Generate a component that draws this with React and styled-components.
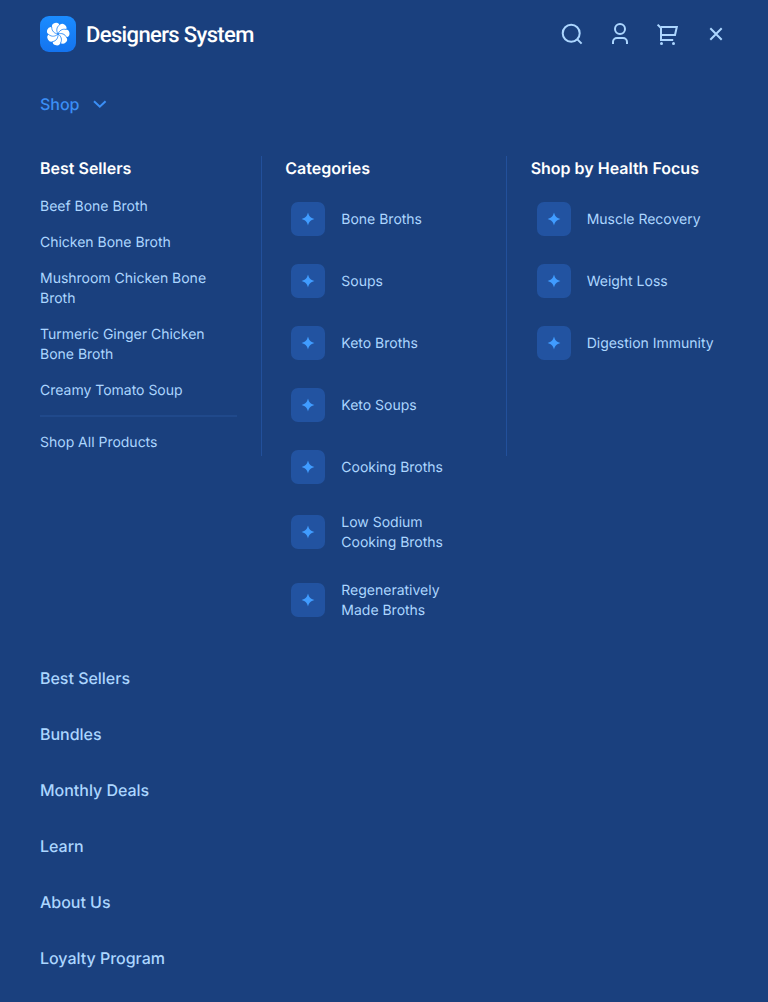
import React from "react";
import styled, { createGlobalStyle } from "styled-components";

const GlobalStyle = createGlobalStyle`
  *, *::before, *::after { box-sizing: border-box; }
  body {
    margin: 0;
    background: #1a407e;
    color: #acd6ff;
    font-family: Inter, "Liberation Sans", sans-serif;
    text-rendering: geometricPrecision;
  }
  button { font: inherit; color: inherit; background: none; border: 0; padding: 0; cursor: pointer; }
  a { color: inherit; text-decoration: none; }
  svg { display: block; }
`;

const Page = styled.div`
  width: 100%;
  min-height: 1002px;
  padding: 0 40px;
`;

const Header = styled.header`
  display: flex;
  align-items: center;
  justify-content: space-between;
  height: 68px;
`;

const Brand = styled.a`
  display: flex;
  align-items: center;
  gap: 10px;
`;

const BrandName = styled.span`
  padding-top: 3px;
  font-family: Roboto, sans-serif;
  font-weight: 500;
  font-size: 22px;
  line-height: 28px;
  letter-spacing: -0.63px;
  color: #fff;
  white-space: nowrap;
`;

const Actions = styled.div`
  display: flex;
  gap: 24px;
`;

const IconButton = styled.button`
  display: flex;
  width: 24px;
  height: 24px;
`;

const StrokeIcon = styled.svg`
  width: ${(p) => p.$size || 24}px;
  height: ${(p) => p.$size || 24}px;
  fill: none;
  stroke: currentColor;
  stroke-width: ${(p) => p.$weight || 2};
`;

const Nav = styled.nav`
  display: flex;
  flex-direction: column;
  gap: 32px;
  padding-top: 24px;
  font-weight: 500;
  font-size: 16px;
  line-height: 24px;
`;

const NavLink = styled.a`
  display: flex;
  align-items: center;
  gap: 12px;
  height: 24px;
  align-self: flex-start;
  letter-spacing: -0.02px;
  color: ${(p) => (p.$active ? "#3b8ff6" : "inherit")};
`;

const MegaMenu = styled.section`
  display: grid;
  grid-template-columns: 1fr 0 1fr 0 1fr;
  column-gap: 24px;
  margin: 8px 0;
`;

const Column = styled.div`
  display: flex;
  flex-direction: column;
  gap: 16px;
  min-width: 0;
`;

const VerticalRule = styled.div`
  width: 1px;
  height: 300px;
  margin-left: -0.5px;
  background: #22509b;
`;

const HorizontalRule = styled.hr`
  width: 100%;
  height: 2px;
  margin: -1px 0;
  border: 0;
  background: #20498b;
`;

const ColumnTitle = styled.h2`
  margin: 0;
  font-weight: 600;
  font-size: 16px;
  line-height: 24px;
  color: #fff;
`;

const TextLink = styled.a`
  padding-top: 1px;
  margin-bottom: -1px;
  font-weight: 400;
  font-size: 14px;
  line-height: 20px;
  letter-spacing: -0.01px;
`;

const TileRow = styled.a`
  display: flex;
  align-items: center;
  gap: 16px;
  padding: 6px;
`;

const Tile = styled.span`
  display: flex;
  align-items: center;
  justify-content: center;
  flex: none;
  width: 34px;
  height: 34px;
  border-radius: 7px;
  background: #2253a1;
  color: #409cff;
`;

const products = [
  "Beef Bone Broth",
  "Chicken Bone Broth",
  "Mushroom Chicken Bone Broth",
  "Turmeric Ginger Chicken Bone Broth",
  "Creamy Tomato Soup",
];
const categories = [
  "Bone Broths",
  "Soups",
  "Keto Broths",
  "Keto Soups",
  "Cooking Broths",
  "Low Sodium Cooking Broths",
  "Regeneratively Made Broths",
];
const focuses = ["Muscle Recovery", "Weight Loss", "Digestion Immunity"];
const pages = ["Best Sellers", "Bundles", "Monthly Deals", "Learn", "About Us", "Loyalty Program"];

const petals = [0, 1, 2, 3, 4, 5, 6].map((n) => (n * 360) / 7);

const Logo = () => (
  <svg width="36" height="36" viewBox="0 0 36 36">
    <defs>
      <linearGradient id="logoFill" x1="0" y1="0" x2="0" y2="1">
        <stop offset="0" stopColor="#1b8cff" />
        <stop offset="1" stopColor="#1474f0" />
      </linearGradient>
    </defs>
    <rect width="36" height="36" rx="9" fill="url(#logoFill)" />
    <circle cx="18" cy="18" r="8" fill="#fff" />
    {petals.map((angle) => (
      <circle key={angle} transform={`rotate(${angle - 16} 18 18)`} cx="18" cy="10.5" r="4" fill="#fff" />
    ))}
    {petals.map((angle) => (
      <path
        key={angle}
        transform={`rotate(${angle + 9.7} 18 18)`}
        d="M18 18C15.6 15.2 15.2 11.6 18 8.6"
        fill="none"
        stroke="#1880f7"
        strokeWidth="0.75"
      />
    ))}
  </svg>
);

const SparkTile = () => (
  <Tile>
    <svg width="14" height="14" viewBox="0 0 14 14" fill="currentColor">
      <path d="M7 .6C8 4.4 9.6 6 13.4 7C9.6 8 8 9.6 7 13.4C6 9.6 4.4 8 .6 7C4.4 6 6 4.4 7 .6Z" />
    </svg>
  </Tile>
);

const TileColumn = ({ title, items }) => (
  <Column>
    <ColumnTitle>{title}</ColumnTitle>
    {items.map((item) => (
      <TileRow key={item} href="#">
        <SparkTile />
        <TextLink as="span">{item}</TextLink>
      </TileRow>
    ))}
  </Column>
);

export default function App() {
  return (
    <>
      <GlobalStyle />
      <Page>
        <Header>
          <Brand href="#">
            <Logo />
            <BrandName>Designers System</BrandName>
          </Brand>
          <Actions>
            <IconButton aria-label="Search">
              <StrokeIcon viewBox="0 0 24 24">
                <circle cx="11.2" cy="11.2" r="8.5" />
                <path d="M17.1 17.1L21.6 21.6" />
              </StrokeIcon>
            </IconButton>
            <IconButton aria-label="Account">
              <StrokeIcon viewBox="0 0 24 24">
                <circle cx="12" cy="7" r="5" />
                <path d="M5 22V20A4 4 0 0 1 9 16H15A4 4 0 0 1 19 20V22" />
              </StrokeIcon>
            </IconButton>
            <IconButton aria-label="Cart">
              <StrokeIcon viewBox="0 0 24 24">
                <path d="M1.6 2.6L5 6V18H17.2M5 5H20.8L19 13H5" />
                <circle cx="5.5" cy="21.5" r="1.5" fill="currentColor" stroke="none" />
                <circle cx="17.5" cy="21.5" r="1.5" fill="currentColor" stroke="none" />
              </StrokeIcon>
            </IconButton>
            <IconButton aria-label="Close">
              <StrokeIcon viewBox="0 0 24 24">
                <path d="M6.3 6.3L17.7 17.7M17.7 6.3L6.3 17.7" />
              </StrokeIcon>
            </IconButton>
          </Actions>
        </Header>
        <Nav>
          <NavLink href="#" $active>
            Shop
            <StrokeIcon viewBox="0 0 16 16" $size={16} $weight={2}>
              <path d="M3 5.2L8.8 10.7L14.6 5.2" />
            </StrokeIcon>
          </NavLink>
          <MegaMenu>
            <Column>
              <ColumnTitle>Best Sellers</ColumnTitle>
              {products.map((item) => (
                <TextLink key={item} href="#">{item}</TextLink>
              ))}
              <HorizontalRule />
              <TextLink href="#">Shop All Products</TextLink>
            </Column>
            <VerticalRule />
            <TileColumn title="Categories" items={categories} />
            <VerticalRule />
            <TileColumn title="Shop by Health Focus" items={focuses} />
          </MegaMenu>
          {pages.map((page) => (
            <NavLink key={page} href="#">{page}</NavLink>
          ))}
        </Nav>
      </Page>
    </>
  );
}
